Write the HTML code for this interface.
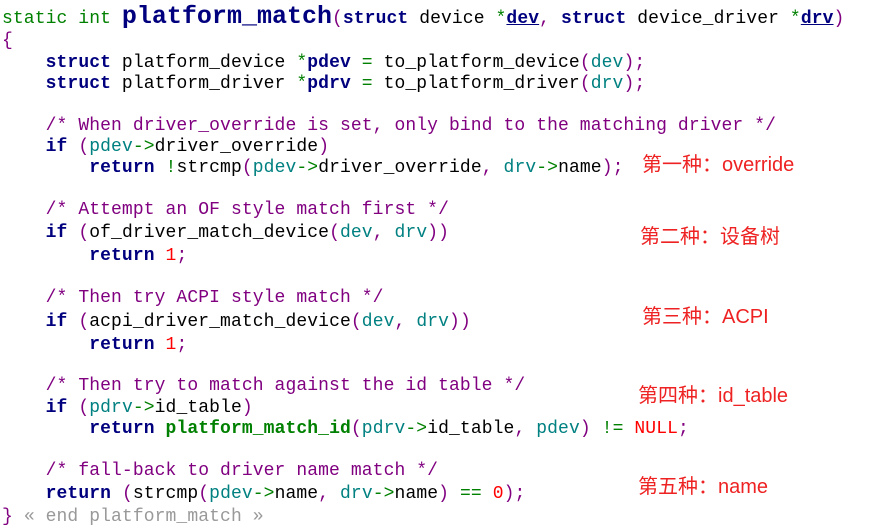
<!DOCTYPE html>
<html><head><meta charset="utf-8"><style>
html,body{margin:0;padding:0;background:#fff;width:886px;height:532px;overflow:hidden;position:relative}
.l{position:absolute;left:2px;white-space:pre;font-family:"Liberation Mono",monospace;font-size:18px;line-height:22px;height:22px;color:#000;letter-spacing:0.1px}
.k{color:#00007f;font-weight:bold}
.g{color:#008000}
.p{color:#800080}
.c{color:#800080}
.t{color:#008080}
.r{color:#ff0000}
.u{text-decoration:underline;color:#00007f;font-weight:bold}
.fn{color:#00007f;font-weight:bold;font-size:25px;letter-spacing:0}
.gf{color:#008000;font-weight:bold}
.gr{color:#999}
.a{position:absolute;font-family:"Liberation Sans","Noto Sans CJK SC",sans-serif;font-size:20px;color:#ee2222;white-space:pre;line-height:24px}
</style></head><body>
<div class="l" style="top:6px"><span class="g">static int </span><span class="fn">platform_match</span><span class="p">(</span><span class="k">struct</span> device <span class="g">*</span><span class="u">dev</span><span class="p">,</span> <span class="k">struct</span> device_driver <span class="g">*</span><span class="u">drv</span><span class="p">)</span></div>
<div class="l" style="top:30px"><span class="p">{</span></div>
<div class="l" style="top:52px">    <span class="k">struct</span> platform_device <span class="g">*</span><span class="k">pdev</span> <span class="g">=</span> to_platform_device<span class="p">(</span><span class="t">dev</span><span class="p">);</span></div>
<div class="l" style="top:73px">    <span class="k">struct</span> platform_driver <span class="g">*</span><span class="k">pdrv</span> <span class="g">=</span> to_platform_driver<span class="p">(</span><span class="t">drv</span><span class="p">);</span></div>
<div class="l" style="top:115px">    <span class="c">/* When driver_override is set, only bind to the matching driver */</span></div>
<div class="l" style="top:136px">    <span class="k">if</span> <span class="p">(</span><span class="t">pdev</span><span class="g">-&gt;</span>driver_override<span class="p">)</span></div>
<div class="l" style="top:157px">        <span class="k">return</span> <span class="g">!</span>strcmp<span class="p">(</span><span class="t">pdev</span><span class="g">-&gt;</span>driver_override<span class="p">,</span> <span class="t">drv</span><span class="g">-&gt;</span>name<span class="p">);</span></div>
<div class="l" style="top:199px">    <span class="c">/* Attempt an OF style match first */</span></div>
<div class="l" style="top:222px">    <span class="k">if</span> <span class="p">(</span>of_driver_match_device<span class="p">(</span><span class="t">dev</span><span class="p">,</span> <span class="t">drv</span><span class="p">))</span></div>
<div class="l" style="top:245px">        <span class="k">return</span> <span class="r">1</span><span class="p">;</span></div>
<div class="l" style="top:287px">    <span class="c">/* Then try ACPI style match */</span></div>
<div class="l" style="top:311px">    <span class="k">if</span> <span class="p">(</span>acpi_driver_match_device<span class="p">(</span><span class="t">dev</span><span class="p">,</span> <span class="t">drv</span><span class="p">))</span></div>
<div class="l" style="top:334px">        <span class="k">return</span> <span class="r">1</span><span class="p">;</span></div>
<div class="l" style="top:375px">    <span class="c">/* Then try to match against the id table */</span></div>
<div class="l" style="top:397px">    <span class="k">if</span> <span class="p">(</span><span class="t">pdrv</span><span class="g">-&gt;</span>id_table<span class="p">)</span></div>
<div class="l" style="top:418px">        <span class="k">return</span> <span class="gf">platform_match_id</span><span class="p">(</span><span class="t">pdrv</span><span class="g">-&gt;</span>id_table<span class="p">,</span> <span class="t">pdev</span><span class="p">)</span> <span class="g">!=</span> <span class="r">NULL</span><span class="p">;</span></div>
<div class="l" style="top:460px">    <span class="c">/* fall-back to driver name match */</span></div>
<div class="l" style="top:483px">    <span class="k">return</span> <span class="p">(</span>strcmp<span class="p">(</span><span class="t">pdev</span><span class="g">-&gt;</span>name<span class="p">,</span> <span class="t">drv</span><span class="g">-&gt;</span>name<span class="p">)</span> <span class="g">==</span> <span class="r">0</span><span class="p">);</span></div>
<div class="l" style="top:506px"><span class="p">}</span> <span class="gr">« end platform_match »</span></div>
<div class="a" style="left:642px;top:153px">第一种：override</div>
<div class="a" style="left:640px;top:225px">第二种：设备树</div>
<div class="a" style="left:642px;top:305px">第三种：ACPI</div>
<div class="a" style="left:638px;top:384px">第四种：id_table</div>
<div class="a" style="left:638px;top:475px">第五种：name</div>
</body></html>
